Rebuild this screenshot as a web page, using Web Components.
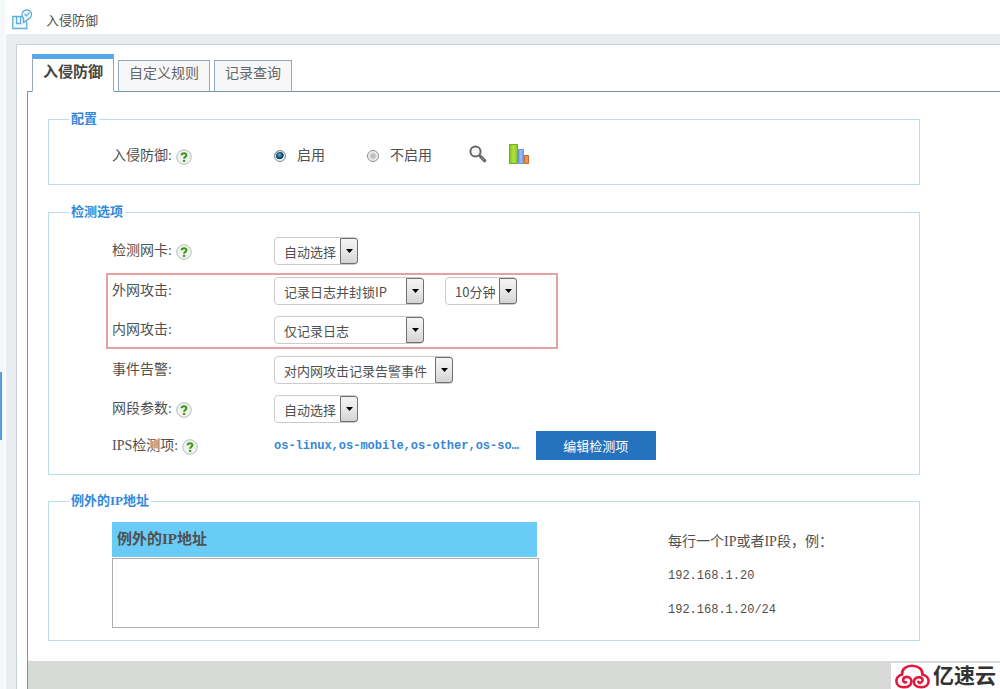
<!DOCTYPE html>
<html lang="zh-CN">
<head>
<meta charset="utf-8">
<title>入侵防御</title>
<style>
  body { margin: 0; font-family: "Liberation Serif", "Noto Sans CJK SC", sans-serif; font-size: 14px; color: #505050; background: #fff; }
</style>
</head>
<body>
<ips-page></ips-page>

<template id="t-page">
  <style>
    :host { display: flex; min-height: 100vh; }
    aside { box-sizing: border-box; width: 6px; flex: none; background: #f3f8f8; border-right: 1px solid #fff; display: flex; flex-direction: column; position: relative; }
    .handle { position: absolute; left: 0; top: 54%; width: 2px; height: 68px; padding: 0; border: 0; background: #5a9bdc; }
    main { flex: 1; min-width: 0; display: flex; flex-direction: column; }
    .work { flex: 1; display: flex; background: #e9edf0; padding: 10px 0 0 10px; }
    .panel { flex: 1; min-width: 0; display: flex; flex-direction: column; background: #fff; border: 1px solid #c8d3de; border-width: 1px 0 0 1px; padding: 9px 0 0 10px; }
    .content { flex: 1; display: flex; flex-direction: column; border: 1px solid #7394ab; border-width: 1px 0 0 1px; }
    .sections { padding: 18px 80px 20px 20px; display: flex; flex-direction: column; gap: 18px; }
    .foot { flex: 1; min-height: 28px; background: #d8dad7; }
    label.opt { display: flex; align-items: center; gap: 11px; margin-right: 42px; line-height: 18px; }
    input[type=radio] { appearance: none; box-sizing: border-box; width: 12px; height: 12px; margin: 0; border: 1px solid #8d8d8d; border-radius: 50%; background: radial-gradient(circle, #bbb 20%, #eee 60%); box-shadow: inset 0 0 0 1px #f4f4f4; }
    input[type=radio]:checked { border-color: #7a8c9a; background: radial-gradient(circle at 45% 40%, #4ea0cc 0 10%, #14425f 36%, #14425f 48%, #e6f0f5 56%); }
    .tool { display: block; line-height: 0; margin: 0 22px 4px 0; }
    .tool:first-of-type { margin-left: -5px; }
    .second { margin-left: 21px; }
    .marked { position: relative; display: flex; flex-direction: column; gap: 11px; margin: 1px 0; }
    .marked::before { content: ""; position: absolute; left: -6px; top: -4px; bottom: -5px; width: 452px; box-sizing: border-box; border: 2px solid #e6a0a3; pointer-events: none; }
    .list { display: flex; flex-direction: column; gap: 11px; }
    .last { margin-top: 8px; }
    .items { color: #3388d8; font: bold 12px "Liberation Mono", monospace; text-decoration: none; }
    .edit { width: 120px; height: 29px; margin-left: 17px; padding: 0; border: 0; background: #2572bf; color: #fff; font: 13px "Noto Sans CJK SC", sans-serif; }
    .except { display: flex; gap: 129px; align-items: flex-start; }
    .box { flex: 0 1 427px; min-width: 0; display: flex; flex-direction: column; gap: 1px; }
    .box label { background: #68ccf7; margin-right: 2px; padding-left: 5px; line-height: 35px; font-size: 15px; font-weight: bold; }
    textarea { display: block; box-sizing: border-box; width: 100%; height: 70px; border: 1px solid #abadb3; resize: none; margin: 0; }
    .hint { padding-top: 3px; margin-bottom: -3px; }
    .hint p { margin: 0; line-height: 34px; }
    .hint p + p { font-family: "Liberation Mono", monospace; font-size: 12px; }
    cloud-mark { position: fixed; right: 0; bottom: 0; }
  </style>
  <aside><button class="handle" aria-label="展开菜单"></button></aside>
  <main>
    <page-title>入侵防御</page-title>
    <div class="work"><div class="panel">
      <tab-bar>
        <a href="#ips" class="on">入侵防御</a><a href="#rules">自定义规则</a><a href="#log">记录查询</a>
      </tab-bar>
      <div class="content">
        <div class="sections">
          <form-section class="config"><span slot="title">配置</span>
            <form-row><span slot="label">入侵防御:</span><help-icon slot="label"></help-icon>
              <label class="opt"><input type="radio" name="ips" checked>启用</label>
              <label class="opt"><input type="radio" name="ips">不启用</label>
              <a class="tool" href="#search" aria-label="查看"><svg width="18" height="18" viewBox="0 0 18 18"><circle cx="6.5" cy="6.5" r="5.1" fill="#f7f7f7" stroke="#666" stroke-width="2"/><path d="M10.3 10.3L12 12" stroke="#666" stroke-width="2"/><path d="M12 12l3.6 3.6" stroke="#666" stroke-width="3.4" stroke-linecap="round"/><path d="M12.2 12.2l3 3" stroke="#999" stroke-width="1"/></svg></a>
              <a class="tool" href="#chart" aria-label="统计"><svg width="20" height="20" viewBox="0 0 20 20"><defs><linearGradient id="g"><stop stop-color="#7fc51c"/><stop offset=".5" stop-color="#b2e045"/><stop offset="1" stop-color="#86c81f"/></linearGradient><linearGradient id="b"><stop stop-color="#6d9be4"/><stop offset=".5" stop-color="#9cc0f5"/><stop offset="1" stop-color="#6b96dd"/></linearGradient></defs><path d="M.5 .5h8v19h-8z" fill="url(#g)" stroke="#72ae1c"/><path d="M9.500 5.500h5v14h-5z" fill="url(#b)" stroke="#6b94da"/><path d="M15.500 11.500h4v8h-4z" fill="#ee9350" stroke="#c8682a"/></svg></a>
            </form-row>
          </form-section>

          <form-section class="options"><span slot="title">检测选项</span>
            <div class="list">
              <form-row><label slot="label" for="nic">检测网卡:</label><help-icon slot="label"></help-icon>
                <select-box style="--w:84px"><select id="nic"><option>自动选择</option></select></select-box></form-row>
              <div class="marked">
                <form-row><label slot="label" for="wan">外网攻击:</label>
                  <select-box style="--w:150px"><select id="wan"><option>记录日志并封锁IP</option></select></select-box>
                  <select-box class="second" style="--w:72px"><select aria-label="封锁时长"><option>10分钟</option></select></select-box></form-row>
                <form-row><label slot="label" for="lan">内网攻击:</label>
                  <select-box style="--w:150px"><select id="lan"><option>仅记录日志</option></select></select-box></form-row>
              </div>
              <form-row><label slot="label" for="alarm">事件告警:</label>
                <select-box style="--w:179px"><select id="alarm"><option>对内网攻击记录告警事件</option></select></select-box></form-row>
              <form-row><label slot="label" for="net">网段参数:</label><help-icon slot="label"></help-icon>
                <select-box style="--w:84px"><select id="net"><option>自动选择</option></select></select-box></form-row>
            </div>
            <form-row class="last"><span slot="label">IPS检测项:</span><help-icon slot="label"></help-icon>
              <a class="items" href="#items">os-linux,os-mobile,os-other,os-so…</a>
              <button class="edit">编辑检测项</button></form-row>
          </form-section>

          <form-section class="exceptions"><span slot="title">例外的IP地址</span>
            <div class="except">
              <div class="box"><label for="ips">例外的IP地址</label><textarea id="ips"></textarea></div>
              <div class="hint"><p>每行一个IP或者IP段，例：</p><p>192.168.1.20</p><p>192.168.1.20/24</p></div>
            </div>
          </form-section>
        </div>
        <div class="foot"></div>
      </div>
    </div></div>
  </main>
  <cloud-mark></cloud-mark>
</template>

<template id="t-title">
  <style>
    :host { display: flex; align-items: center; gap: 14px; height: 34px; padding-left: 6px; font-size: 13px; background: #fff; }
    svg { flex: none; margin-top: 4px; }
    h1 { margin: 8px 0 0; font: inherit; line-height: 18px; }
  </style>
  <svg width="20" height="21" viewBox="0 0 20 21" fill="none" stroke="#60add8" stroke-width="1.3"><path d="M10 7.500H.8v12h14v-5.500L11.500 9.200z" fill="#eef9ff"/><path d="M4.600 7.500v7h4v-7"/><path d="M11.500 13.500V9.200C8.800 6 10 1 14.800 .8c5 .2 6 5.400 3 8.200-1.500 1.600-3.500 2.500-6.300 4.500z" fill="#eef9ff"/><path d="M12.500 5l2 1.800 3-3.200"/></svg>
  <h1><slot></slot></h1>
</template>

<template id="t-tabs">
  <style>
    :host { display: flex; align-items: flex-end; gap: 4px; padding-left: 5px; margin-bottom: -1px; position: relative; height: 38px; }
    ::slotted(a) { box-sizing: border-box; height: 32px; line-height: 26px; padding: 0 10px; border: 1px solid #93a9bc; border-bottom-color: #7394ab; background: #f7f7f7; color: #666; font-size: 14px; text-decoration: none; }
    ::slotted(a.on) { height: 38px; line-height: 26px; border-top: 5px solid #53a7ea; border-bottom-color: #fff; background: #fff; color: #444; font-size: 15px; font-weight: bold; }
  </style>
  <slot></slot>
</template>

<template id="t-section">
  <style>
    :host { display: block; }
    fieldset { margin: 0; border: 1px solid #b9dbee; padding: var(--pad-top, 9px) 10px var(--pad-bottom, 8px) 63px; min-width: 0; }
    :host(.options) { --pad-top: 16px; --pad-bottom: 14px; }
    :host(.exceptions) { --pad-top: 12px; --pad-bottom: 12px; margin-top: -1px; }
    :host(.config) { --pad-top: 14px; --pad-bottom: 14px; }
    legend { margin-left: -43px; padding: 0 2px; font-size: 13px; line-height: 18px; font-weight: bold; color: #3388dd; }
  </style>
  <fieldset><legend><slot name="title"></slot></legend><slot></slot></fieldset>
</template>

<template id="t-row">
  <style>
    :host { display: flex; align-items: center; min-height: 28px; }
    .label { flex: none; width: 162px; display: flex; align-items: center; gap: 4px; line-height: 18px; }
  </style>
  <div class="label"><slot name="label"></slot></div><slot></slot>
</template>

<template id="t-select">
  <style>
    :host { display: flex; position: relative; width: var(--w); height: 28px; }
    ::slotted(select) { appearance: none; box-sizing: border-box; width: 100%; height: 28px; margin: 0; padding: 0 18px 0 9px; border: 1px solid #ccc; border-radius: 4px; background: #fff; color: #505050; font: 13px "Noto Sans CJK SC", sans-serif; }
    .arrow { position: absolute; right: 0; top: 1px; bottom: 1px; width: 18px; box-sizing: border-box; border: 1px solid #707070; border-radius: 0 3px 3px 0; background: linear-gradient(#f4f4f4, #e8e8e8 50%, #d4d4d4); display: flex; align-items: center; justify-content: center; pointer-events: none; }
  </style>
  <slot></slot>
  <span class="arrow"><svg width="7" height="4" viewBox="0 0 7 4"><path d="M0 0h7L3.500 4z" fill="#000"/></svg></span>
</template>

<template id="t-help">
  <style>
    :host { display: block; line-height: 0; padding-top: 2px; }
    svg { display: block; }
  </style>
  <svg width="16" height="16" viewBox="0 0 16 16" role="img" aria-label="帮助"><circle cx="8" cy="8" r="7.300" fill="#eef3ee" stroke="#b4bfbd"/><path d="M5.600 6.200C5.700 3.500 10.500 3.500 10.400 6.100 10.300 7.700 8.200 7.700 8.100 9.700" fill="none" stroke="#3f9418" stroke-width="2"/><path d="M7 10.900h2.200v2H7z" fill="#3f9418"/></svg>
</template>

<template id="t-cloud">
  <style>
    :host { display: flex; align-items: center; gap: 3px; box-sizing: border-box; width: 109px; height: 26px; padding-left: 4px; background: #fff; color: #333; font: bold 21px/24px "Liberation Sans", "Noto Sans CJK SC", sans-serif; white-space: nowrap; }
    svg { flex: none; }
  </style>
  <svg width="35" height="25" viewBox="0 0 35 25" fill="none" stroke="#e3193e" stroke-width="2.6" stroke-linecap="round"><path d="M7 10.500C6.500 5 11.500 1.700 17 1.700S28 5 27.500 10.500"/><path d="M7 10.500C-.8 12.500-.5 23.300 8.500 23.300 18.500 23.300 18.500 12.800 11.500 12.900 7 13.200 7.200 19 11 18.300"/><path d="M27.500 10.500C36 12.500 35.500 23.300 26.500 23.300 21 23.300 18 20.500 19 16.500 20.500 12 27.600 12.300 27.600 16 27.500 19 24 19.600 23.400 17.800"/></svg>
  <span>亿速云</span>
</template>

<script>
  const define = (name, id) => customElements.define(name, class extends HTMLElement {
    constructor() {
      super();
      this.attachShadow({ mode: "open" }).append(document.getElementById(id).content.cloneNode(true));
    }
  });
  define("page-title", "t-title");
  define("tab-bar", "t-tabs");
  define("form-section", "t-section");
  define("form-row", "t-row");
  define("select-box", "t-select");
  define("help-icon", "t-help");
  define("cloud-mark", "t-cloud");
  define("ips-page", "t-page");
</script>
</body>
</html>
